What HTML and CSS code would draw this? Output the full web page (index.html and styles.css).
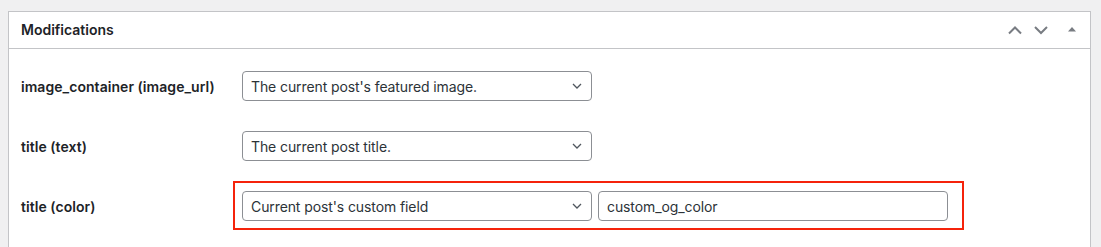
FILE: index.html
```html
<!DOCTYPE html>
<html>
<head>
  <meta charset="utf-8">
  <title>Modifications</title>
  <link rel="stylesheet" href="styles.css">
</head>
<body>

  <div class="postbox">
    <div class="postbox-header">
      <h2 class="hndle">Modifications</h2>
      <div class="handle-actions">
        <svg class="handle-up" width="16" height="10" viewBox="0 0 16 10"><path d="M2 8.5 L8 2.5 L14 8.5" /></svg>
        <svg class="handle-down" width="16" height="10" viewBox="0 0 16 10"><path d="M2 2 L8 8 L14 2" /></svg>
        <svg class="handle-toggle" width="10" height="6" viewBox="0 0 10 6"><polygon points="1,5.5 5,1 9,5.5" /></svg>
      </div>
    </div>

    <div class="inside">
      <div class="mod-row">
        <div class="mod-label">image_container (image_url)</div>
        <div class="mod-field">
          <div class="select-wrap">
            <select class="mod-select">
              <option>The current post's featured image.</option>
            </select>
            <svg class="select-arrow" width="10" height="6" viewBox="0 0 10 6"><path d="M1 1 L5 5 L9 1" /></svg>
          </div>
        </div>
      </div>

      <div class="mod-row">
        <div class="mod-label">title (text)</div>
        <div class="mod-field">
          <div class="select-wrap">
            <select class="mod-select">
              <option>The current post title.</option>
            </select>
            <svg class="select-arrow" width="10" height="6" viewBox="0 0 10 6"><path d="M1 1 L5 5 L9 1" /></svg>
          </div>
        </div>
      </div>

      <div class="mod-row">
        <div class="mod-label short">title (color)</div>
        <div class="mod-field highlighted">
          <div class="select-wrap">
            <select class="mod-select">
              <option>Current post's custom field</option>
            </select>
            <svg class="select-arrow" width="10" height="6" viewBox="0 0 10 6"><path d="M1 1 L5 5 L9 1" /></svg>
          </div>
          <input class="mod-input" type="text" value="custom_og_color">
        </div>
      </div>
    </div>
  </div>

</body>
</html>
```

FILE: styles.css
```css
html, body {
  margin: 0;
  background: #f0f0f1;
}

body {
  padding: 11px 10px 0 8px;
  font-family: Inter, "Liberation Sans", sans-serif;
  font-size: 14px;
  color: #1d2327;
}

.postbox {
  background: #fff;
  border: 1px solid #c3c4c7;
  border-bottom: 0;
  height: 240px;
}

.postbox-header {
  display: flex;
  align-items: center;
  height: 36px;
  border-bottom: 1px solid #c3c4c7;
  padding-left: 12px;
}

.hndle {
  margin: 0;
  font-size: 14px;
  font-weight: 600;
  line-height: 1.4;
}

.handle-actions {
  margin-left: auto;
  display: flex;
  align-items: center;
  padding-right: 13px;
}

.handle-actions path {
  fill: none;
  stroke: #787c82;
  stroke-width: 2;
}

.handle-actions polygon {
  fill: #787c82;
}

.handle-down {
  margin-left: 10px;
}

.handle-toggle {
  margin-left: 18px;
  margin-top: -3px;
}

.inside {
  padding: 7px 12px 12px;
}

.mod-row {
  display: flex;
  align-items: center;
  min-height: 60px;
}

.mod-label {
  width: 221px;
  flex-shrink: 0;
  font-weight: 600;
  letter-spacing: 0.05px;
}

.mod-label.short {
  width: 212px;
}

.mod-field {
  display: flex;
  align-items: center;
  gap: 6px;
}

.mod-field.highlighted {
  border: 2px solid #f5230b;
  padding: 8px 14px 7px 7px;
  margin-top: -1px;
}

.select-wrap {
  position: relative;
  width: 350px;
}

.mod-select,
.mod-input {
  box-sizing: border-box;
  width: 350px;
  height: 30px;
  margin: 0;
  border: 1px solid #8c8f94;
  border-radius: 4px;
  background: #fff;
  color: #2c3338;
  font-family: inherit;
  font-size: 14px;
  letter-spacing: -0.1px;
}

.mod-select {
  display: block;
  -webkit-appearance: none;
  appearance: none;
  padding: 0 24px 0 8px;
}

.mod-input {
  padding: 0 8px;
}

.select-arrow {
  position: absolute;
  right: 10px;
  top: 12px;
  pointer-events: none;
}

.select-arrow path {
  fill: none;
  stroke: #50575e;
  stroke-width: 1.3;
}
```
